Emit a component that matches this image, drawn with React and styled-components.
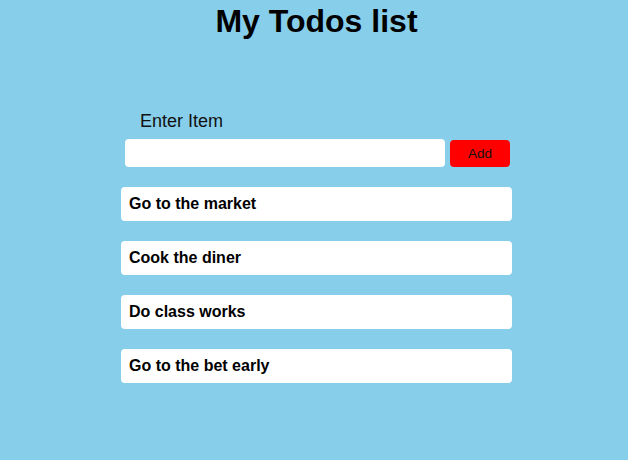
import React, { useState } from 'react';
import styled, { createGlobalStyle } from 'styled-components';

const GlobalStyle = createGlobalStyle`
  html, body {
    margin: 0;
    padding: 0;
    background: #87ceeb;
    font-family: "Liberation Sans", Arial, sans-serif;
  }
`;

const Page = styled.div`
  min-height: 460px;
  padding-left: 5px;
  display: flex;
  flex-direction: column;
  align-items: center;
`;

const Title = styled.h1`
  margin: 3px 0 0;
  font-size: 32px;
  line-height: 37px;
  font-weight: bold;
  color: #000;
`;

const Form = styled.form`
  width: 391px;
  margin-top: 71px;
  display: flex;
  flex-direction: column;
`;

const Label = styled.label`
  margin-left: 19px;
  font-size: 18px;
  line-height: 21px;
  color: #111;
`;

const InputRow = styled.div`
  display: flex;
  align-items: flex-start;
  margin-top: 7px;
  padding-left: 4px;
  gap: 5px;
`;

const Input = styled.input`
  width: 320px;
  height: 28px;
  box-sizing: border-box;
  border: none;
  border-radius: 4px;
  background: #fff;
  outline: none;
  padding: 0 6px;
  font: 14px "Liberation Sans", Arial, sans-serif;
`;

const AddButton = styled.button`
  width: 60px;
  height: 27px;
  margin-top: 1px;
  border: none;
  border-radius: 4px;
  background: #ff0000;
  color: #111;
  font: 13.5px "Liberation Sans", Arial, sans-serif;
  cursor: pointer;
`;

const List = styled.ul`
  list-style: none;
  margin: 20px 0 0;
  padding: 0;
  width: 391px;
  display: flex;
  flex-direction: column;
  gap: 20px;
`;

const Item = styled.li`
  height: 34px;
  box-sizing: border-box;
  background: #fff;
  border-radius: 4px;
  padding: 0 8px;
  display: flex;
  align-items: center;
  font-size: 16px;
  font-weight: bold;
  color: #000;
`;

export default function App() {
  const [text, setText] = useState('');
  const [todos, setTodos] = useState([
    'Go to the market',
    'Cook the diner',
    'Do class works',
    'Go to the bet early',
  ]);

  const add = (e) => {
    e.preventDefault();
    if (!text.trim()) return;
    setTodos([...todos, text.trim()]);
    setText('');
  };

  return (
    <Page>
      <GlobalStyle />
      <Title>My Todos list</Title>
      <Form onSubmit={add}>
        <Label htmlFor="item">Enter Item</Label>
        <InputRow>
          <Input id="item" value={text} onChange={(e) => setText(e.target.value)} />
          <AddButton type="submit">Add</AddButton>
        </InputRow>
      </Form>
      <List>
        {todos.map((t, i) => (
          <Item key={i}>{t}</Item>
        ))}
      </List>
    </Page>
  );
}
